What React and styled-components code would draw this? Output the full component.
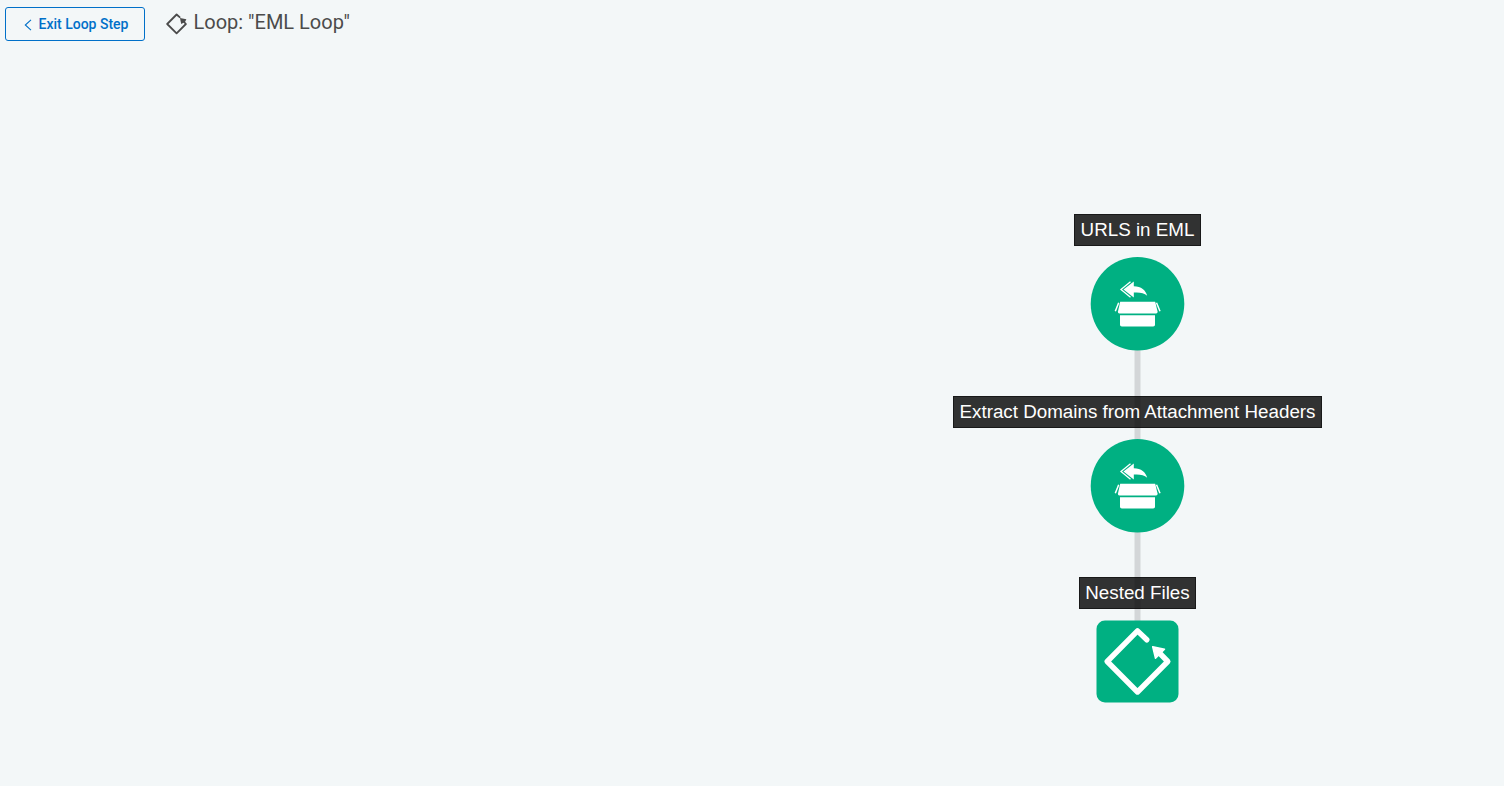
import React from "react";
import styled, { createGlobalStyle } from "styled-components";

const GlobalStyle = createGlobalStyle`
  body {
    margin: 0;
    background: #f3f7f8;
    font-family: Roboto, "Liberation Sans", sans-serif;
  }
`;

const Page = styled.main`
  position: relative;
  height: 786px;
  overflow: hidden;
  background: #f3f7f8;
`;

const Toolbar = styled.header`
  display: flex;
  align-items: flex-start;
  padding: 7px 5px;
`;

const ExitButton = styled.button`
  display: flex;
  align-items: center;
  box-sizing: border-box;
  width: 140px;
  height: 34px;
  padding: 0 0 0 18px;
  border: 1px solid #0070c9;
  border-radius: 3px;
  background: transparent;
  color: #0070c9;
  font: 500 14px/20px Roboto, sans-serif;
  white-space: nowrap;
`;

const Chevron = styled.svg`
  width: 8px;
  height: 12px;
  margin: 2px 6.5px 0 0;
`;

const Title = styled.h1`
  display: flex;
  margin: 0 0 0 21px;
  color: #4b4b4b;
  font-weight: 400;
  font-size: 20px;
  line-height: 30px;
  white-space: nowrap;
`;

const TitleIcon = styled.svg`
  width: 22px;
  height: 22px;
  margin: 6px 5.5px 0 0;
`;

/* Nodes are placed freely on the canvas, centred on the connector line. */
const Node = styled.section`
  position: absolute;
  left: 937.5px;
  top: ${(p) => p.$top}px;
  width: 400px;
  display: flex;
  flex-direction: column;
  align-items: center;
`;

const Label = styled.div`
  box-sizing: border-box;
  width: ${(p) => p.$width}px;
  height: 32px;
  margin-bottom: 11px;
  border: 1px solid rgba(0, 0, 0, 0.5);
  background: rgba(0, 0, 0, 0.8);
  color: #fff;
  font: 18.8px/30px "Liberation Sans", Arial, sans-serif;
  text-align: center;
  white-space: nowrap;
`;

const Art = styled.svg`
  display: block;
  width: ${(p) => p.$size}px;
  height: ${(p) => p.$size}px;
`;

const Connector = styled.div`
  position: absolute;
  left: 1134px;
  top: ${(p) => p.$top}px;
  box-sizing: border-box;
  width: 7px;
  height: ${(p) => p.$height}px;
  border: solid #e3e7e8;
  border-width: 0 1px;
  background: #d3d6d8;
`;

function BoxArt() {
  return (
    <Art $size={95} viewBox="-0.5 0.2 95 95">
      <circle cx="47" cy="47" r="46.8" fill="#00b082" />
      <g fill="#fff">
        <path d="M33 32.8L43.3 24.8V29.5C50.8 29.6 55.2 33.5 56.7 39C53.5 36 49.3 35.3 43.3 35.7V40.8Z" />
        <path d="M29.7 45H64.7L67 54.5Q67.4 56.8 65.5 56.8H29Q27 56.8 27.5 54.5Z" />
        <path d="M29.5 58.5H64.5V68Q64.5 69.8 62.7 69.8H31.3Q29.5 69.8 29.5 68Z" />
      </g>
      <g fill="none" stroke="#fff">
        <path d="M40 25L30.5 32.8L40 40.5" strokeWidth="1.3" />
        <path d="M28.2 46L24.8 54.4M66 46L69.5 54.4" strokeWidth="1.5" />
      </g>
    </Art>
  );
}

function LoopArt() {
  return (
    <Art $size={83} viewBox="-0.5 0 83 83">
      <rect y="0.5" width="82" height="82" rx="8.5" fill="#00b082" />
      <path d="M50.3 19.8L41 10.9L10.7 41.5L41 72L71.3 41.5L62 32" fill="none" stroke="#fff" strokeWidth="5.4" strokeLinecap="round" strokeLinejoin="round" />
      <path d="M56.2 26.7L68 29.2L59 38.2Z" fill="#fff" stroke="#fff" strokeWidth="1.5" strokeLinejoin="round" />
    </Art>
  );
}

export default function App() {
  return (
    <Page>
      <GlobalStyle />
      <Toolbar>
        <ExitButton>
          <Chevron viewBox="0 0 8 12">
            <path d="M7 .8L1.3 6L7 11.2" fill="none" stroke="currentColor" strokeWidth="1.1" />
          </Chevron>
          Exit Loop Step
        </ExitButton>
        <Title>
          <TitleIcon viewBox="0 0 22 22">
            <path d="M13.6 4.2L10.6 1.5L1.2 11L10.6 20.3L19.9 11L17.2 8" fill="none" stroke="#4b4b4b" strokeWidth="1.8" strokeLinecap="round" strokeLinejoin="round" />
            <path d="M14 5L20.4 6.2L19 9L15.2 11Z" fill="#4b4b4b" />
          </TitleIcon>
          Loop: "EML Loop"
        </Title>
      </Toolbar>
      <Connector $top={350} $height={90} />
      <Connector $top={532} $height={89} />
      <Node $top={214}>
        <Label $width={127}>URLS in EML</Label>
        <BoxArt />
      </Node>
      <Node $top={396}>
        <Label $width={369}>Extract Domains from Attachment Headers</Label>
        <BoxArt />
      </Node>
      <Node $top={577}>
        <Label $width={117}>Nested Files</Label>
        <LoopArt />
      </Node>
    </Page>
  );
}
